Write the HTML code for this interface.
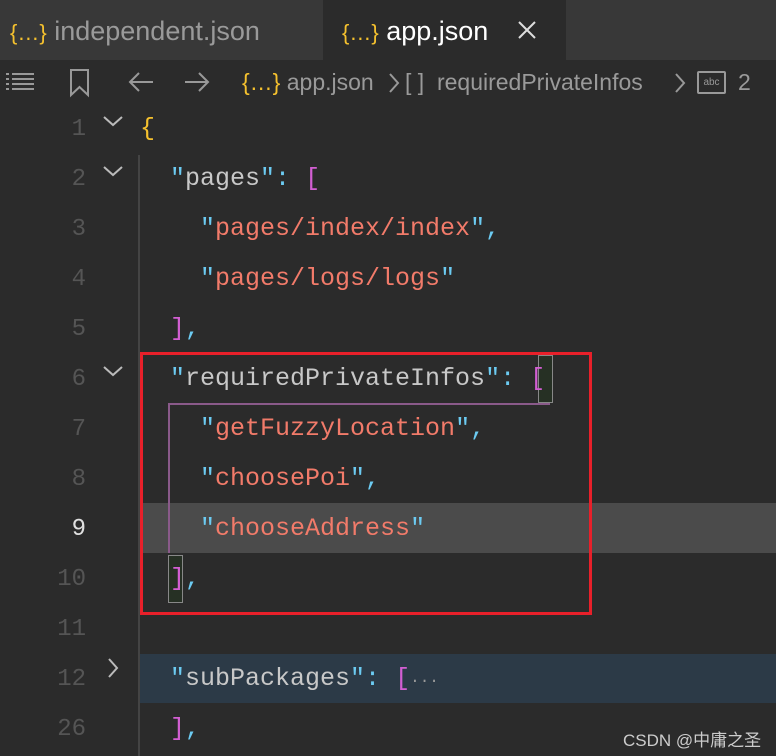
<!DOCTYPE html>
<html><head><style>
body{margin:0;width:776px;height:756px;background:#2b2b2b;overflow:hidden;position:relative;font-family:"Liberation Sans",sans-serif}
.tabbar{position:absolute;left:0;top:0;width:776px;height:60px;background:#383838}
.tab{position:absolute;top:0;height:60px;line-height:62px;font-size:27px}
.br{color:#f5c12e;font-family:"Liberation Sans",sans-serif}
.crumb{position:absolute;top:60px;left:0;width:776px;height:44px;background:#2b2b2b;color:#9a9a9a;font-size:23px;line-height:44px}
.ln{position:absolute;left:0;width:86px;text-align:right;color:#555;font:24px "Liberation Mono",monospace}
.code{position:absolute;font:25px "Liberation Mono",monospace;white-space:pre;color:#c8c8c8}
.q{color:#6ccbf2}.s{color:#f27b6a}.p{color:#d35fd3}
</style></head><body>
<div class="tabbar"></div>
<div class="tab" style="left:10px;color:#9a9a9a"><span class="br" style="font-size:22px">{…}</span> independent.json</div>
<div style="position:absolute;left:323px;top:0;width:243px;height:60px;background:#2b2b2b"></div>
<div class="tab" style="left:342px;color:#fff"><span class="br" style="font-size:22px">{…}</span> app.json</div>
<svg style="position:absolute;left:517px;top:20px" width="20" height="20"><path d="M2 2L18 18M18 2L2 18" stroke="#ddd" stroke-width="2"/></svg>
<div class="crumb">
<span style="position:absolute;left:6px;top:0">
<svg width="30" height="44" viewBox="0 0 30 44"><g stroke="#999" stroke-width="2"><line x1="0" y1="14" x2="3" y2="14"/><line x1="6" y1="14" x2="28" y2="14"/><line x1="0" y1="19" x2="3" y2="19"/><line x1="6" y1="19" x2="28" y2="19"/><line x1="0" y1="24" x2="3" y2="24"/><line x1="6" y1="24" x2="28" y2="24"/><line x1="0" y1="29" x2="3" y2="29"/><line x1="6" y1="29" x2="28" y2="29"/></g></svg></span>
<svg style="position:absolute;left:68px;top:8px" width="24" height="30"><path d="M3 2H20V27L11.5 19L3 27Z" fill="none" stroke="#999" stroke-width="2"/></svg>
<svg style="position:absolute;left:127px;top:10px" width="28" height="24"><path d="M26 12H3M12 3L3 12L12 21" fill="none" stroke="#999" stroke-width="2"/></svg>
<svg style="position:absolute;left:183px;top:10px" width="28" height="24"><path d="M2 12H25M16 3L25 12L16 21" fill="none" stroke="#999" stroke-width="2"/></svg>
<span style="position:absolute;left:242px"><span class="br">{…}</span> app.json</span>
<svg style="position:absolute;left:387px;top:12px" width="14" height="22"><path d="M3 2L11 11L3 20" fill="none" stroke="#999" stroke-width="2"/></svg>
<span style="position:absolute;left:405px">[ ]&nbsp; requiredPrivateInfos</span>
<svg style="position:absolute;left:673px;top:12px" width="14" height="22"><path d="M3 2L11 11L3 20" fill="none" stroke="#999" stroke-width="2"/></svg>
<span style="position:absolute;left:697px;top:11px;width:25px;height:19px;border:2px solid #999;border-radius:2px;font-size:10px;line-height:19px;text-align:center">abc</span>
<span style="position:absolute;left:738px">2</span>
</div>
<div style="position:absolute;left:138px;top:503px;width:638px;height:50px;background:#4b4b4b"></div>
<div style="position:absolute;left:140px;top:654px;width:636px;height:49px;background:#2c3a47"></div>
<div style="position:absolute;left:138px;top:155px;width:2px;height:601px;background:#444"></div>
<div style="position:absolute;left:168px;top:403px;width:382px;height:2px;background:#8a5a8a"></div>
<div style="position:absolute;left:168px;top:403px;width:2px;height:150px;background:#8a5a8a"></div>
<div style="position:absolute;left:538px;top:355px;width:13px;height:46px;border:1px solid #888;background:#263024"></div>
<div style="position:absolute;left:168px;top:555px;width:13px;height:46px;border:1px solid #888;background:#263024"></div>

<div class="ln" style="top:116px">1</div>
<div class="ln" style="top:166px">2</div>
<div class="ln" style="top:216px">3</div>
<div class="ln" style="top:266px">4</div>
<div class="ln" style="top:316px">5</div>
<div class="ln" style="top:366px">6</div>
<div class="ln" style="top:416px">7</div>
<div class="ln" style="top:466px">8</div>
<div class="ln" style="top:516px;color:#e0e0e0">9</div>
<div class="ln" style="top:566px">10</div>
<div class="ln" style="top:616px">11</div>
<div class="ln" style="top:666px">12</div>
<div class="ln" style="top:716px">26</div>
<svg style="position:absolute;left:102px;top:114px" width="22" height="14"><path d="M2 3L11 11L20 3" fill="none" stroke="#bbb" stroke-width="2"/></svg>
<svg style="position:absolute;left:102px;top:164px" width="22" height="14"><path d="M2 3L11 11L20 3" fill="none" stroke="#bbb" stroke-width="2"/></svg>
<svg style="position:absolute;left:102px;top:364px" width="22" height="14"><path d="M2 3L11 11L20 3" fill="none" stroke="#bbb" stroke-width="2"/></svg>
<svg style="position:absolute;left:106px;top:657px" width="14" height="22"><path d="M3 2L11 11L3 20" fill="none" stroke="#bbb" stroke-width="2"/></svg>

<div class="code" style="left:140px;top:114px;color:#f5c12e">{</div>
<div class="code" style="left:170px;top:164px"><span class="q">"</span>pages<span class="q">":</span> <span class="p">[</span></div>
<div class="code" style="left:200px;top:214px"><span class="q">"</span><span class="s">pages/index/index</span><span class="q">",</span></div>
<div class="code" style="left:200px;top:264px"><span class="q">"</span><span class="s">pages/logs/logs</span><span class="q">"</span></div>
<div class="code" style="left:170px;top:314px"><span class="p">]</span><span class="q">,</span></div>
<div class="code" style="left:170px;top:364px"><span class="q">"</span>requiredPrivateInfos<span class="q">":</span> <span class="p">[</span></div>
<div class="code" style="left:200px;top:414px"><span class="q">"</span><span class="s">getFuzzyLocation</span><span class="q">",</span></div>
<div class="code" style="left:200px;top:464px"><span class="q">"</span><span class="s">choosePoi</span><span class="q">",</span></div>
<div class="code" style="left:200px;top:514px"><span class="q">"</span><span class="s">chooseAddress</span><span class="q">"</span></div>
<div class="code" style="left:170px;top:564px"><span class="p">]</span><span class="q">,</span></div>
<div class="code" style="left:170px;top:664px"><span class="q">"</span>subPackages<span class="q">":</span> <span class="p">[</span><span style="color:#999;font-size:16px">···</span></div>
<div class="code" style="left:170px;top:714px"><span class="p">]</span><span class="q">,</span></div>

<div style="position:absolute;left:140px;top:352px;width:446px;height:257px;border:3px solid #e8202a"></div>
<div style="position:absolute;left:623px;top:726px;color:#ccc;font:17px 'Liberation Sans','Noto Sans CJK SC',sans-serif">CSDN @中庸之圣</div>
</body></html>
